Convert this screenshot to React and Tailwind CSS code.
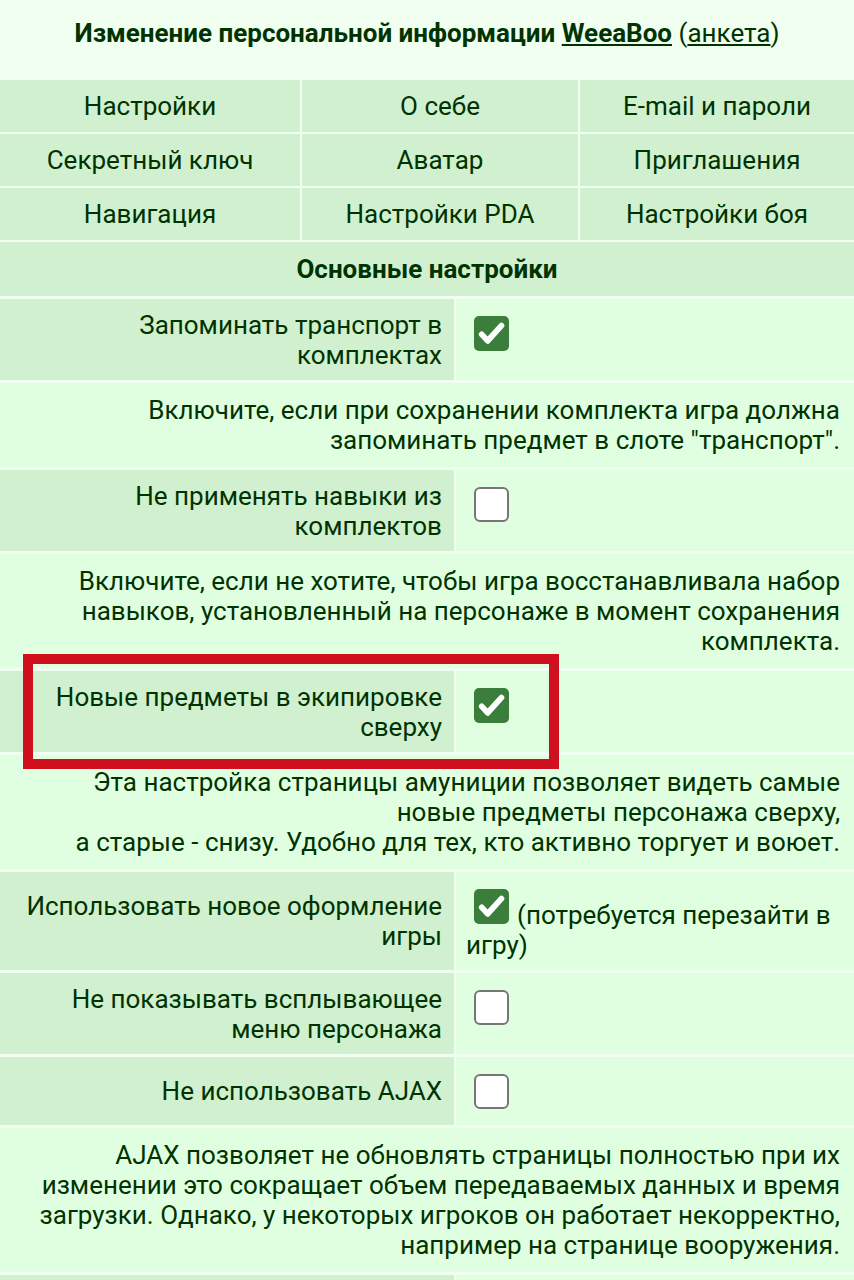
import React from 'react';

const navItems = [
  'Настройки', 'О себе', 'E-mail и пароли',
  'Секретный ключ', 'Аватар', 'Приглашения',
  'Навигация', 'Настройки PDA', 'Настройки боя',
];

const Checkbox = ({ checked }) =>
  checked ? (
    <span className="inline-block align-baseline mt-[7px] ml-[8px] mr-[8px] w-[35px] h-[35px] rounded-[5px] bg-[#3b7d3b]">
      <svg viewBox="0 0 24 24" className="w-[35px] h-[35px]">
        <path d="M5.3 12.6l4.1 4.4L18.8 6.6" fill="none" stroke="#fff" strokeWidth="4" strokeLinecap="round" strokeLinejoin="round" />
      </svg>
    </span>
  ) : (
    <span className="inline-block align-baseline mt-[7px] ml-[8px] mr-[8px] w-[35px] h-[35px] rounded-[6px] bg-white border-2 border-[#767676]" />
  );

const SettingRow = ({ label, checked, note }) => (
  <div className="grid grid-cols-[454px_1fr] gap-x-[2px]">
    <div className="bg-[#d0f0d0] flex items-center justify-end text-right px-[12px] py-[10.5px]">
      {label}
    </div>
    <div className="bg-[#e0ffe0] p-[10px]">
      <Checkbox checked={checked} />
      {note && <span>{note}</span>}
    </div>
  </div>
);

const Desc = ({ children }) => (
  <div className="bg-[#e0ffe0] text-right pl-[20px] pr-[14px] py-[12px]">{children}</div>
);

export default function App() {
  return (
    <div className="min-h-screen bg-[#f0fff0] text-[#003300] text-[26px] leading-[30px] font-['Roboto','Noto_Sans',sans-serif]">
      <div className="h-[80px] pt-[18px] text-center">
        <span className="font-bold">Изменение персональной информации </span>
        <a href="#" className="font-bold underline">WeeaBoo</a>
        <span> (<a href="#" className="underline">анкета</a>)</span>
      </div>

      <div className="grid grid-cols-[300px_276px_1fr] gap-x-[2px] gap-y-[2px]">
        {navItems.map(item => (
          <a key={item} href="#" className="bg-[#d0f0d0] text-center py-[11px]">
            {item}
          </a>
        ))}
      </div>

      <div className="flex flex-col gap-y-[3px] pt-[2px]">
        <div className="bg-[#d0f0d0] text-center font-bold py-[12px]">Основные настройки</div>

        <SettingRow label="Запоминать транспорт в комплектах" checked />
        <Desc>Включите, если при сохранении комплекта игра должна запоминать предмет в слоте "транспорт".</Desc>

        <SettingRow label="Не применять навыки из комплектов" />
        <Desc>
          Включите, если не хотите, чтобы игра восстанавливала набор навыков, установленный на персонаже в момент сохранения комплекта.
        </Desc>

        <div className="relative">
          <SettingRow label="Новые предметы в экипировке сверху" checked />
          <div className="absolute left-[23px] top-[-17px] w-[536px] h-[115px] border-[10px] border-[#d0101f] pointer-events-none z-10" />
        </div>
        <Desc>
          Эта настройка страницы амуниции позволяет видеть самые новые предметы персонажа сверху,
          <br />
          а старые - снизу. Удобно для тех, кто активно торгует и воюет.
        </Desc>

        <SettingRow label="Использовать новое оформление игры" checked note="(потребуется перезайти в игру)" />
        <SettingRow label="Не показывать всплывающее меню персонажа" />
        <SettingRow label="Не использовать AJAX" />
        <Desc>
          AJAX позволяет не обновлять страницы полностью при их изменении это сокращает объем передаваемых данных и время загрузки. Однако, у некоторых игроков он работает некорректно, например на странице вооружения.
        </Desc>

        <div className="grid grid-cols-[454px_1fr] gap-x-[2px] h-[70px]">
          <div className="bg-[#d0f0d0]" />
          <div className="bg-[#e0ffe0]" />
        </div>
      </div>
    </div>
  );
}
